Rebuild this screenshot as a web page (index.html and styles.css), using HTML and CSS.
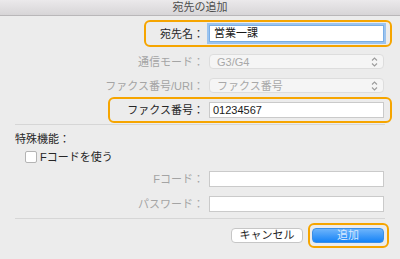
FILE: index.html
```html
<!DOCTYPE html>
<html lang="ja">
<head>
    <meta charset="UTF-8">
    <title>宛先の追加</title>
    <link rel="stylesheet" href="styles.css">
</head>
<body>
    <div class="window">
        <div class="titlebar">宛先の追加</div>
        <div class="content">
            <div class="row hl hl-name">
                <span class="label">宛先名：</span>
                <div class="field input focus">営業一課</div>
            </div>
            <div class="row row-mode dim">
                <span class="label">通信モード：</span>
                <div class="field popup">
                    <span>G3/G4</span>
                    <svg class="chev" width="7" height="10" viewBox="0 0 7 10"><path d="M1 3.5 L3.5 1 L6 3.5 M1 6.5 L3.5 9 L6 6.5" fill="none" stroke="#9c9c9c" stroke-width="1.1"/></svg>
                </div>
            </div>
            <div class="row row-uri dim">
                <span class="label">ファクス番号/URI：</span>
                <div class="field popup">
                    <span>ファクス番号</span>
                    <svg class="chev" width="7" height="10" viewBox="0 0 7 10"><path d="M1 3.5 L3.5 1 L6 3.5 M1 6.5 L3.5 9 L6 6.5" fill="none" stroke="#9c9c9c" stroke-width="1.1"/></svg>
                </div>
            </div>
            <div class="row hl hl-fax">
                <span class="label">ファクス番号：</span>
                <div class="field input">01234567</div>
            </div>
            <div class="sep"></div>

            <div class="section">特殊機能：</div>
            <div class="check"><span class="box"></span>Fコードを使う</div>
            <div class="row row-fcode dim">
                <span class="label">Fコード：</span>
                <div class="field input"></div>
            </div>
            <div class="row row-pass dim">
                <span class="label">パスワード：</span>
                <div class="field input"></div>
            </div>
            <div class="sep sep2"></div>

            <div class="buttons">
                <button class="btn cancel">キャンセル</button>
                <div class="hl-btn">
                    <button class="btn add">追加</button>
                </div>
            </div>
        </div>
    </div>
</body>
</html>
```

FILE: styles.css
```css
body{
    margin: 0;
    background-color: #ececec;
    font-family: "Liberation Sans", "Noto Sans CJK JP", sans-serif;
    font-size: 11px;
    color: #262626;
}

.window{
    width: 400px;
    height: 259px;
    background-color: #ececec;
}

.titlebar{
    height: 15px;
    line-height: 15px;
    text-align: center;
    color: #4d4d4d;
    background: linear-gradient(#ebe9eb, #d7d5d7);
    border-bottom: 1px solid #b9b7b9;
}

.content{
    padding: 4px 8px 0 15px;
}

.row{
    display: flex;
    justify-content: flex-end;
    align-items: center;
    gap: 5px;
    padding-right: 8px;
    line-height: 14px;
}

.label{
    text-align: right;
}

.dim{
    color: #a4a4a4;
}

.field{
    width: 175px;
    height: 16px;
    box-sizing: border-box;
}

.input{
    background-color: #fff;
    border: 1px solid #cacaca;
    padding-left: 3px;
    color: #1a1a1a;
}

.input.focus{
    height: 17px;
    border-color: #7aaee6;
    box-shadow: 0 0 0 2px #9cc4ef;
    padding-left: 4px;
}

.popup{
    height: 15px;
    display: flex;
    align-items: center;
    justify-content: space-between;
    padding: 0 5px 0 7px;
    background-color: #f5f5f5;
    border: 1px solid #dddddd;
    border-radius: 4px;
    color: #a8a8a8;
}

/* orange highlight frames */
.hl{
    border: 2px solid #f6a500;
    border-radius: 6px;
    padding: 3px 6px 3px 0;
    margin-left: auto;
    box-sizing: border-box;
}
.hl-name{
    width: 248px;
}
.hl-fax{
    width: 284px;
    margin-top: 4px;
}

.row-mode{
    margin-top: 7px;
}
.row-uri{
    margin-top: 9px;
}

.sep{
    height: 1px;
    margin: 1px 7px 0 0;
    background-color: #d6d6d6;
}

.section{
    margin-top: 7px;
    line-height: 14px;
}

.check{
    display: flex;
    align-items: center;
    gap: 3px;
    margin: 4px 0 0 10px;
    line-height: 14px;
}
.check .box{
    width: 10px;
    height: 10px;
    background-color: #fff;
    border: 1px solid #b4b4b4;
    border-radius: 2px;
}

.row-fcode{
    margin-top: 7px;
}
.row-pass{
    margin-top: 9px;
}

.sep2{
    margin-top: 6px;
}

.buttons{
    display: flex;
    justify-content: flex-end;
    align-items: center;
    gap: 5px;
    margin-top: 4px;
    padding-right: 3px;
}

.hl-btn{
    border: 2px solid #f6a500;
    border-radius: 6px;
    padding: 3px 3px 3px 2px;
}

.btn{
    width: 72px;
    height: 15px;
    padding: 0;
    font-family: inherit;
    font-size: 11px;
    line-height: 13px;
    border-radius: 4px;
}

.cancel{
    background-color: #fff;
    border: 1px solid #c6c6c6;
    color: #262626;
}

.add{
    background: linear-gradient(#6db4fb, #1683f6);
    border: 1px solid #3b8fe6;
    color: #d6e9ff;
}
```
